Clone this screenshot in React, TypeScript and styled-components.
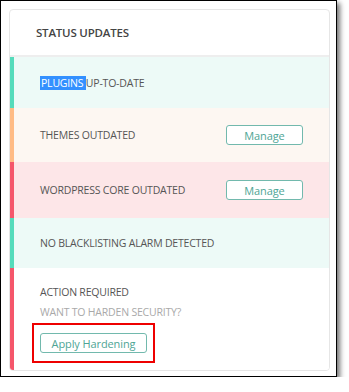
import React from 'react';
import styled, { createGlobalStyle } from 'styled-components';

const GlobalStyle = createGlobalStyle`
  body {
    margin: 0;
    background: #fff;
    font-family: 'Open Sans', 'Liberation Sans', sans-serif;
  }
`;

const Frame = styled.div`
  border: 1.5px solid #000;
  box-shadow: 3px 3px 5px rgba(0, 0, 0, 0.55);
  padding: 8px 0 0 8px;
  box-sizing: content-box;
  width: 327px;
  height: 367px;
`;

const Card = styled.div`
  width: 319px;
  border: 1px solid #e6e6e6;
  border-radius: 4px;
  overflow: hidden;
  background: #fff;
`;

const Header = styled.div`
  height: 45px;
  display: flex;
  align-items: center;
  padding-left: 26px;
  font-size: 11.5px;
  font-weight: 600;
  letter-spacing: -0.2px;
  color: #444;
  border-bottom: 2px solid #eeeeee;
`;

type Tone = 'ok' | 'warn' | 'danger' | 'action';

const tones: Record<Tone, { bar: string; bg: string }> = {
  ok: { bar: '#55dbbb', bg: '#edfaf7' },
  warn: { bar: '#ffbb85', bg: '#fdf7f2' },
  danger: { bar: '#f5566b', bg: '#fde6e8' },
  action: { bar: '#f5566b', bg: '#ffffff' },
};

const Row = styled.div<{ tone: Tone; h?: number }>`
  display: flex;
  align-items: center;
  justify-content: space-between;
  min-height: ${({ h }) => h ?? 50}px;
  box-sizing: border-box;
  padding: 0 26px 0 26px;
  border-left: 4px solid ${({ tone }) => tones[tone].bar};
  background: ${({ tone }) => tones[tone].bg};
  font-size: 10.5px;
  letter-spacing: -0.2px;
  color: #555;
`;

const ActionRow = styled(Row)`
  flex-direction: column;
  align-items: flex-start;
  justify-content: flex-start;
  padding: 17px 0 7px 18px;
`;

const Label = styled.span``;

const Selected = styled.span`
  background: #3390ff;
  color: #fff;
  padding: 0 0 0 1px;
`;

const Sub = styled.div`
  margin-top: 6px;
  padding-left: 8px;
  color: #a9a9a9;
`;

const Title = styled.div`
  padding-left: 8px;
  color: #555;
`;

const OutlineButton = styled.button<{ w: number }>`
  width: ${({ w }) => w}px;
  height: 20px;
  border: 1px solid #72b9ad;
  border-radius: 3px;
  background: #fff;
  color: #4fa595;
  font-family: 'Open Sans', 'Liberation Sans', sans-serif;
  font-size: 11px;
  letter-spacing: -0.1px;
  padding: 0;
  display: flex;
  align-items: center;
  justify-content: center;
`;

const Highlight = styled.div`
  margin-top: 4px;
  border: 2.5px solid #ee0000;
  padding: 8px 6px;
`;

export default function App() {
  return (
    <>
      <GlobalStyle />
      <Frame>
        <Card>
          <Header>STATUS UPDATES</Header>
          <Row tone="ok" h={51}>
            <Label>
              <Selected>PLUGINS </Selected>UP-TO-DATE
            </Label>
          </Row>
          <Row tone="warn" h={54}>
            <Label>THEMES OUTDATED</Label>
            <OutlineButton w={77}>Manage</OutlineButton>
          </Row>
          <Row tone="danger" h={56}>
            <Label>WORDPRESS CORE OUTDATED</Label>
            <OutlineButton w={77}>Manage</OutlineButton>
          </Row>
          <Row tone="ok" h={50}>
            <Label>NO BLACKLISTING ALARM DETECTED</Label>
          </Row>
          <ActionRow tone="action">
            <Title>ACTION REQUIRED</Title>
            <Sub>WANT TO HARDEN SECURITY?</Sub>
            <Highlight>
              <OutlineButton w={107}>Apply Hardening</OutlineButton>
            </Highlight>
          </ActionRow>
        </Card>
      </Frame>
    </>
  );
}
